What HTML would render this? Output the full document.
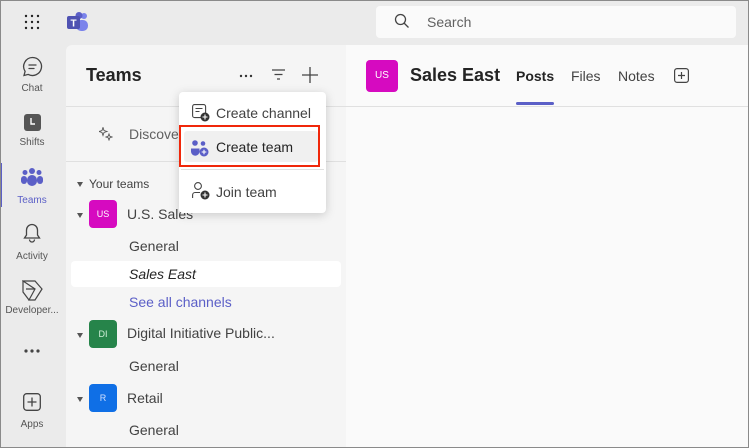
<!DOCTYPE html><html><head><style>
*{box-sizing:border-box;margin:0;padding:0}
body{width:749px;height:448px;overflow:hidden;font-family:"Liberation Sans",sans-serif;background:#ebebeb;position:relative}
.frame{position:absolute;inset:0;border:1px solid #8a8a8a;pointer-events:none;z-index:10}
.a{position:absolute}
.t{position:absolute;white-space:nowrap}
.rail .t{font-size:10px;color:#555;width:64px;text-align:center;left:0}
.ch{font-size:14px;color:#424242}
.tri{position:absolute;width:0;height:0;border-left:3.5px solid transparent;border-right:3.5px solid transparent;border-top:5px solid #555}
</style></head><body>
<div class="frame"></div>
<svg class="a" style="left:24px;top:14px" width="16" height="16"><g fill="#222"><circle cx="2" cy="2" r="1.2"/><circle cx="8" cy="2" r="1.2"/><circle cx="14" cy="2" r="1.2"/><circle cx="2" cy="8" r="1.2"/><circle cx="8" cy="8" r="1.2"/><circle cx="14" cy="8" r="1.2"/><circle cx="2" cy="14" r="1.2"/><circle cx="8" cy="14" r="1.2"/><circle cx="14" cy="14" r="1.2"/></g></svg>
<svg class="a" style="left:67px;top:12px" width="22" height="20"><circle cx="17" cy="4" r="3" fill="#7b83eb"/><circle cx="12" cy="3.5" r="3.5" fill="#5b5fc7"/><rect x="9" y="8" width="12" height="11" rx="5" fill="#7b83eb"/><rect x="0" y="4" width="13" height="13" rx="2" fill="#4f52b2"/><text x="6.5" y="14.5" font-size="10" fill="#fff" text-anchor="middle" font-family="Liberation Sans" font-weight="bold">T</text></svg>
<div class="a" style="left:376px;top:6px;width:360px;height:32px;background:#fafafa;border-radius:4px"></div>
<svg class="a" style="left:394px;top:13px" width="16" height="16"><circle cx="6.5" cy="6.5" r="5" fill="none" stroke="#444" stroke-width="1.3"/><path d="M10 10l4.5 4.5" stroke="#444" stroke-width="1.3"/></svg>
<div class="t" style="left:427px;top:14px;font-size:14px;color:#616161">Search</div>
<div class="rail">
<svg class="a" style="left:22px;top:56px" width="21" height="21"><path d="M10.5 1.5a9 9 0 1 1-4.3 16.9L2 19.5l1.1-4.1A9 9 0 0 1 10.5 1.5z" fill="none" stroke="#444" stroke-width="1.3"/><path d="M7 9h7M7 12.5h5" stroke="#444" stroke-width="1.3" stroke-linecap="round"/></svg>
<div class="t" style="top:83px">Chat</div>
<svg class="a" style="left:24px;top:114px" width="17" height="17"><rect x="0" y="0" width="17" height="17" rx="3" fill="#555"/><path d="M7 4v6h4" stroke="#fff" stroke-width="1.4" fill="none"/></svg>
<div class="t" style="top:137px">Shifts</div>
<div class="a" style="left:0;top:163px;width:2px;height:44px;background:#5b5fc7"></div>
<svg class="a" style="left:21px;top:168px" width="22" height="19"><g fill="#5b5fc7"><circle cx="11" cy="3" r="3"/><circle cx="4" cy="4.5" r="2.5"/><circle cx="18" cy="4.5" r="2.5"/><rect x="6" y="7" width="10" height="11" rx="5"/><rect x="0" y="8" width="6" height="8" rx="3"/><rect x="16" y="8" width="6" height="8" rx="3"/></g></svg>
<div class="t" style="top:195px;color:#5b5fc7">Teams</div>
<svg class="a" style="left:23px;top:223px" width="18" height="20"><path d="M9 1.5a5.5 5.5 0 0 1 5.5 5.5v5l2 3H1.5l2-3V7A5.5 5.5 0 0 1 9 1.5zM6.5 16.5a2.5 2.5 0 0 0 5 0" fill="none" stroke="#444" stroke-width="1.3"/></svg>
<div class="t" style="top:251px">Activity</div>
<svg class="a" style="left:22px;top:280px" width="21" height="21"><path d="M1 1h12l7 8-7 11H7l6-11L1 1zM1 1v11l6 8M13 9H4" fill="none" stroke="#444" stroke-width="1.2"/></svg>
<div class="t" style="top:305px">Developer...</div>
<svg class="a" style="left:24px;top:349px" width="16" height="4"><g fill="#444"><circle cx="2" cy="2" r="1.6"/><circle cx="8" cy="2" r="1.6"/><circle cx="14" cy="2" r="1.6"/></g></svg>
<svg class="a" style="left:23px;top:393px" width="18" height="18"><rect x="0.7" y="0.7" width="16.6" height="16.6" rx="3" fill="none" stroke="#444" stroke-width="1.3"/><path d="M9 4.5v9M4.5 9h9" stroke="#444" stroke-width="1.3"/></svg>
<div class="t" style="top:419px">Apps</div>
</div>
<div class="a" style="left:66px;top:45px;width:280px;height:403px;background:#f5f5f5;border-top-left-radius:6px"></div>
<div class="t" style="left:86px;top:65px;font-size:18px;font-weight:bold;color:#242424">Teams</div>
<svg class="a" style="left:239px;top:74px" width="14" height="4"><g fill="#333"><circle cx="2" cy="2" r="1.2"/><circle cx="7" cy="2" r="1.2"/><circle cx="12" cy="2" r="1.2"/></g></svg>
<svg class="a" style="left:271px;top:69px" width="15" height="12"><path d="M1 1h13M3.5 5.5h8M6 10h3" stroke="#444" stroke-width="1.2"/></svg>
<svg class="a" style="left:302px;top:67px" width="16" height="16"><path d="M8 0v16M0 8h16" stroke="#444" stroke-width="1.3"/></svg>
<div class="a" style="left:66px;top:106px;width:280px;height:1px;background:#e0e0e0"></div>
<svg class="a" style="left:99px;top:127px" width="14" height="14"><path d="M4 0.5l1 3 3 1-3 1-1 3-1-3-3-1 3-1zM10 7l.8 2.2L13 10l-2.2.8L10 13l-.8-2.2L7 10l2.2-.8z" fill="none" stroke="#555" stroke-width="0.9"/></svg>
<div class="t" style="left:129px;top:126px;font-size:14px;color:#616161">Discove</div>
<div class="a" style="left:66px;top:161px;width:280px;height:1px;background:#e0e0e0"></div>
<div class="tri" style="left:77px;top:182px"></div>
<div class="t" style="left:89px;top:177px;font-size:12px;color:#424242">Your teams</div>
<div class="tri" style="left:77px;top:213px"></div>
<div class="a" style="left:89px;top:200px;width:28px;height:28px;border-radius:4px;background:#d60ac0;color:#fff;font-size:9px;text-align:center;line-height:28px">US</div>
<div class="t" style="left:127px;top:206px;font-size:14px;color:#424242">U.S. Sales</div>
<div class="t ch" style="left:129px;top:238px">General</div>
<div class="a" style="left:71px;top:261px;width:270px;height:26px;background:#fff;border-radius:4px"></div>
<div class="t ch" style="left:129px;top:266px;font-style:italic;color:#242424">Sales East</div>
<div class="t ch" style="left:129px;top:294px;color:#5b5fc7">See all channels</div>
<div class="tri" style="left:77px;top:333px"></div>
<div class="a" style="left:89px;top:320px;width:28px;height:28px;border-radius:4px;background:#26844a;color:#d0f0d8;font-size:9px;text-align:center;line-height:28px">DI</div>
<div class="t" style="left:127px;top:325px;font-size:14px;color:#424242">Digital Initiative Public...</div>
<div class="t ch" style="left:129px;top:358px">General</div>
<div class="tri" style="left:77px;top:397px"></div>
<div class="a" style="left:89px;top:384px;width:28px;height:28px;border-radius:4px;background:#0f6fe6;color:#cfe0ff;font-size:9px;text-align:center;line-height:28px">R</div>
<div class="t" style="left:127px;top:390px;font-size:14px;color:#424242">Retail</div>
<div class="t ch" style="left:129px;top:422px">General</div>
<div class="a" style="left:346px;top:45px;width:402px;height:403px;background:#fafafa"></div>
<div class="a" style="left:346px;top:106px;width:402px;height:1px;background:#e0e0e0"></div>
<div class="a" style="left:366px;top:60px;width:32px;height:32px;border-radius:4px;background:#d60ac0;color:#fff;font-size:10px;text-align:center;line-height:32px">US</div>
<div class="t" style="left:410px;top:65px;font-size:18px;font-weight:bold;color:#242424">Sales East</div>
<div class="t" style="left:516px;top:68px;font-size:14px;font-weight:bold;color:#242424">Posts</div>
<div class="a" style="left:516px;top:102px;width:38px;height:3px;background:#5b5fc7;border-radius:2px"></div>
<div class="t" style="left:571px;top:68px;font-size:14px;color:#424242">Files</div>
<div class="t" style="left:618px;top:68px;font-size:14px;color:#424242">Notes</div>
<svg class="a" style="left:674px;top:68px" width="15" height="15"><rect x="0.6" y="0.6" width="13.8" height="13.8" rx="2.5" fill="none" stroke="#444" stroke-width="1.2"/><path d="M7.5 4v7M4 7.5h7" stroke="#444" stroke-width="1.2"/></svg>
<div class="a" style="left:179px;top:92px;width:147px;height:121px;background:#fff;border-radius:4px;box-shadow:0 2px 10px rgba(0,0,0,.18)"></div>
<svg class="a" style="left:192px;top:104px" width="18" height="18"><rect x="0.6" y="0.6" width="13" height="13" rx="2" fill="none" stroke="#444" stroke-width="1.1"/><path d="M3.5 4.5h7M3.5 7.5h4" stroke="#444" stroke-width="1.1"/><circle cx="13" cy="13" r="4.5" fill="#333"/><path d="M13 10.5v5M10.5 13h5" stroke="#fff" stroke-width="1.1"/></svg>
<div class="t" style="left:216px;top:105px;font-size:14px;color:#424242">Create channel</div>
<div class="a" style="left:184px;top:131px;width:134px;height:31px;background:#f0f0f0;border-radius:3px"></div>
<div class="a" style="left:179px;top:125px;width:141px;height:42px;border:2px solid #f0270a"></div>
<svg class="a" style="left:191px;top:140px" width="18" height="17"><g fill="#5b5fc7"><circle cx="4" cy="3" r="2.8"/><circle cx="12" cy="3.5" r="2.3"/><path d="M0 8.5h8.5v3a4.2 4.2 0 0 1-8.5 0z"/><circle cx="13" cy="12" r="4.5"/></g><path d="M13 9.7v4.6M10.7 12h4.6" stroke="#fff" stroke-width="1.1"/></svg>
<div class="t" style="left:216px;top:139px;font-size:14px;color:#242424">Create team</div>
<div class="a" style="left:181px;top:169px;width:143px;height:1px;background:#e0e0e0"></div>
<svg class="a" style="left:192px;top:182px" width="18" height="18"><circle cx="6" cy="4" r="3.4" fill="none" stroke="#444" stroke-width="1.1"/><path d="M.6 16v-3a2.5 2.5 0 0 1 2.5-2.5h5" fill="none" stroke="#444" stroke-width="1.1"/><circle cx="13" cy="13" r="4.5" fill="#333"/><path d="M13 10.5v5M10.5 13h5" stroke="#fff" stroke-width="1.1"/></svg>
<div class="t" style="left:216px;top:184px;font-size:14px;color:#424242">Join team</div>
</body></html>
